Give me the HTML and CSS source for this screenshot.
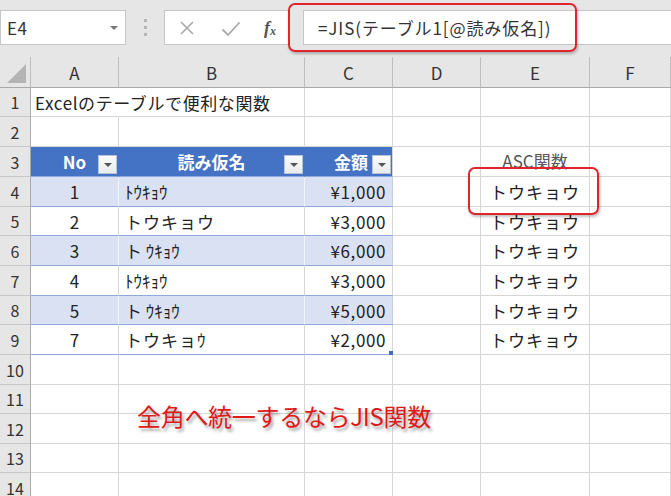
FILE: index.html
```html
<!DOCTYPE html>
<html lang="ja">
<head>
<meta charset="utf-8">
<title>Excel JIS</title>
<link rel="stylesheet" href="styles.css">
</head>
<body>
<div class="app">
  <div class="toolbar">
    <div class="namebox">
      <span class="nb-text">E4</span>
      <span class="nb-arrow"></span>
    </div>
    <div class="dots"><i></i><i></i><i></i></div>
    <div class="fx-group">
      <svg class="ic ic-x" width="14" height="14" viewBox="0 0 14 14"><path d="M1 1L13 13M13 1L1 13" stroke="#a9a9a9" stroke-width="1.6" fill="none"/></svg>
      <svg class="ic ic-check" width="20" height="16" viewBox="0 0 20 16"><path d="M1.5 8.5L7 14L18.5 1.5" stroke="#a9a9a9" stroke-width="1.8" fill="none"/></svg>
      <span class="fx">f<sub>x</sub></span>
    </div>
    <div class="formula">=JIS(テーブル1[@読み仮名])</div>
  </div>

  <div class="sheet">
    <div class="corner"><span class="tri"></span></div>
    <div class="ch">A</div><div class="ch">B</div><div class="ch">C</div><div class="ch">D</div><div class="ch">E</div><div class="ch">F</div>

    <div class="rh">1</div>
    <div class="c noline"><span class="overflow">Excelのテーブルで便利な関数</span></div><div class="c"></div><div class="c"></div><div class="c"></div><div class="c"></div><div class="c"></div>

    <div class="rh">2</div>
    <div class="c"></div><div class="c"></div><div class="c"></div><div class="c"></div><div class="c"></div><div class="c"></div>

    <div class="rh">3</div>
    <div class="c th center">No<span class="dd"></span></div>
    <div class="c th center">読み仮名<span class="dd"></span></div>
    <div class="c th right thr">金額<span class="dd"></span></div>
    <div class="c"></div>
    <div class="c center sub">ASC関数</div>
    <div class="c"></div>

    <div class="rh">4</div>
    <div class="c band center">1</div><div class="c band left">ﾄｳｷｮｳ</div><div class="c band right bandr num">¥1,000</div>
    <div class="c"></div><div class="c center kana">トウキョウ</div><div class="c"></div>

    <div class="rh">5</div>
    <div class="c plain center">2</div><div class="c plain left kana">トウキョウ</div><div class="c plain right num">¥3,000</div>
    <div class="c"></div><div class="c center kana">トウキョウ</div><div class="c"></div>

    <div class="rh">6</div>
    <div class="c band center">3</div><div class="c band left">ト ｳｷｮｳ</div><div class="c band right bandr num">¥6,000</div>
    <div class="c"></div><div class="c center kana">トウキョウ</div><div class="c"></div>

    <div class="rh">7</div>
    <div class="c plain center">4</div><div class="c plain left">ﾄｳｷｮｳ</div><div class="c plain right num">¥3,000</div>
    <div class="c"></div><div class="c center kana">トウキョウ</div><div class="c"></div>

    <div class="rh">8</div>
    <div class="c band center">5</div><div class="c band left">ト ｳｷｮｳ</div><div class="c band right bandr num">¥5,000</div>
    <div class="c"></div><div class="c center kana">トウキョウ</div><div class="c"></div>

    <div class="rh">9</div>
    <div class="c plain last center">7</div><div class="c plain last left kana">トウキョｳ</div><div class="c plain last right num">¥2,000<span class="handle"></span></div>
    <div class="c"></div><div class="c center kana">トウキョウ</div><div class="c"></div>

    <div class="rh">10</div>
    <div class="c"></div><div class="c"></div><div class="c"></div><div class="c"></div><div class="c"></div><div class="c"></div>
    <div class="rh">11</div>
    <div class="c"></div><div class="c"></div><div class="c"></div><div class="c"></div><div class="c"></div><div class="c"></div>
    <div class="rh">12</div>
    <div class="c"></div><div class="c"></div><div class="c"></div><div class="c"></div><div class="c"></div><div class="c"></div>
    <div class="rh">13</div>
    <div class="c"></div><div class="c"></div><div class="c"></div><div class="c"></div><div class="c"></div><div class="c"></div>
    <div class="rh">14</div>
    <div class="c"></div><div class="c"></div><div class="c"></div><div class="c"></div><div class="c"></div><div class="c"></div>
  </div>

  <div class="mark mark-formula"></div>
  <div class="mark mark-cell"></div>
  <div class="note">全角へ統一するならJIS関数</div>
</div>
</body>
</html>
```

FILE: styles.css
```css
* { box-sizing: border-box; }
html, body {
  margin: 0;
  padding: 0;
  width: 671px;
  height: 496px;
  overflow: hidden;
  background: #fff;
}
body {
  font-family: "Noto Sans CJK JP", "Noto Sans", sans-serif;
  color: #222;
}
.app {
  position: relative;
  width: 671px;
  height: 496px;
  overflow: hidden;
}

/* toolbar */
.toolbar {
  height: 57px;
  background: #e6e6e6;
  display: flex;
  align-items: flex-start;
  padding-top: 10px;
}
.namebox {
  width: 126px;
  height: 35px;
  background: #fff;
  border: 1px solid #c6c6c6;
  display: flex;
  align-items: center;
  justify-content: space-between;
  padding: 0 7px 0 6px;
}
.nb-text {
  font-size: 17px;
  color: #333;
  letter-spacing: 0.5px;
}
.nb-arrow {
  width: 0;
  height: 0;
  border-left: 4px solid transparent;
  border-right: 4px solid transparent;
  border-top: 4px solid #777;
  margin-top: 1px;
}
.dots {
  width: 38px;
  height: 35px;
  display: flex;
  flex-direction: column;
  align-items: center;
  justify-content: center;
  gap: 4px;
}
.dots i {
  display: block;
  width: 3px;
  height: 3px;
  background: #b5b5b5;
}
.fx-group {
  width: 126px;
  height: 35px;
  background: #fff;
  border: 1px solid #c6c6c6;
  display: flex;
  align-items: center;
  padding-left: 15px;
}
.ic-x { margin-right: 27px; }
.ic-check { margin-right: 23px; margin-top: 2px; }
.fx {
  font-family: "Liberation Serif", serif;
  font-style: italic;
  font-weight: bold;
  font-size: 18px;
  color: #555;
  line-height: 1;
}
.fx sub {
  font-size: 12px;
  vertical-align: -1px;
}
.formula {
  flex: 1;
  margin-left: 13px;
  height: 35px;
  background: #fff;
  border: 1px solid #c6c6c6;
  border-right: none;
  display: flex;
  align-items: center;
  padding-left: 14px;
  font-size: 17px;
  letter-spacing: 0.9px;
  color: #333;
  white-space: nowrap;
}

/* sheet grid */
.sheet {
  display: grid;
  grid-template-columns: 31px 88px 186px 88px 88px 109px 1fr;
  grid-template-rows: 31px 29px 30px 30px 30px 29px 30px 30px 29px 30px 30px 29px 30px 29px 30px;
  font-size: 17px;
}
.corner {
  background: #e6e6e6;
  border-right: 1px solid #bdbdbd;
  border-bottom: 1px solid #a9a9a9;
  position: relative;
}
.tri {
  position: absolute;
  right: 4px;
  bottom: 4px;
  width: 0;
  height: 0;
  border-left: 19px solid transparent;
  border-bottom: 19px solid #b4b4b4;
}
.ch {
  background: #e6e6e6;
  border-right: 1px solid #bdbdbd;
  border-bottom: 1px solid #a9a9a9;
  display: flex;
  align-items: center;
  justify-content: center;
  font-size: 17px;
  color: #333;
  padding-top: 1px;
}
.rh {
  background: #e6e6e6;
  border-right: 1px solid #a9a9a9;
  border-bottom: 1px solid #c8c8c8;
  display: flex;
  align-items: center;
  justify-content: center;
  font-size: 16px;
  color: #333;
}
.c {
  border-right: 1px solid #d6d6d6;
  border-bottom: 1px solid #d6d6d6;
  display: flex;
  align-items: center;
  position: relative;
  white-space: nowrap;
  min-width: 0;
}
.c.noline { border-right-color: transparent; }
.overflow {
  position: relative;
  z-index: 1;
  padding-left: 4px;
  letter-spacing: 0.6px;
}
.center { justify-content: center; }
.left { justify-content: flex-start; padding-left: 6px; }
.right { justify-content: flex-end; padding-right: 6px; }
.kana { letter-spacing: 1px; }
.num { letter-spacing: 0.6px; }

.th {
  background: #4472c4;
  color: #fff;
  font-weight: bold;
  border-right-color: #4472c4;
  border-bottom-color: #8ea9db;
}
.th.thr { padding-right: 24px; border-right-color: #d6d6d6; }
.dd {
  position: absolute;
  right: 1px;
  top: 8px;
  width: 19px;
  height: 19px;
  background: linear-gradient(#fbfbfb, #e9ebef);
  border: 1px solid #b9c3d6;
}
.dd::after {
  content: "";
  position: absolute;
  left: 5px;
  top: 7px;
  border-left: 4px solid transparent;
  border-right: 4px solid transparent;
  border-top: 4px solid #555;
}
.band {
  background: #d9e1f2;
  border-right-color: #eef2fa;
  border-bottom-color: #8ea9db;
}
.band.bandr { border-right-color: #c3cde0; }
.plain { border-bottom-color: #8ea9db; }
.sub { color: #555; padding-bottom: 2px; }
.handle {
  position: absolute;
  right: -1px;
  bottom: -1px;
  width: 4px;
  height: 4px;
  background: #3f6fc0;
}

/* overlays */
.mark {
  position: absolute;
  border: 2px solid #e0242c;
  border-radius: 7px;
  box-shadow: 1px 2px 3px rgba(0, 0, 0, 0.25);
}
.mark-formula { left: 288px; top: 3px; width: 289px; height: 49px; }
.mark-cell { left: 468px; top: 167px; width: 131px; height: 48px; }
.note {
  position: absolute;
  left: 137px;
  top: 400px;
  font-size: 24px;
  line-height: 32px;
  color: #e01818;
  font-weight: 400;
  letter-spacing: -0.3px;
  text-shadow: 2px 3px 3px rgba(0, 0, 0, 0.35);
  white-space: nowrap;
}
```
